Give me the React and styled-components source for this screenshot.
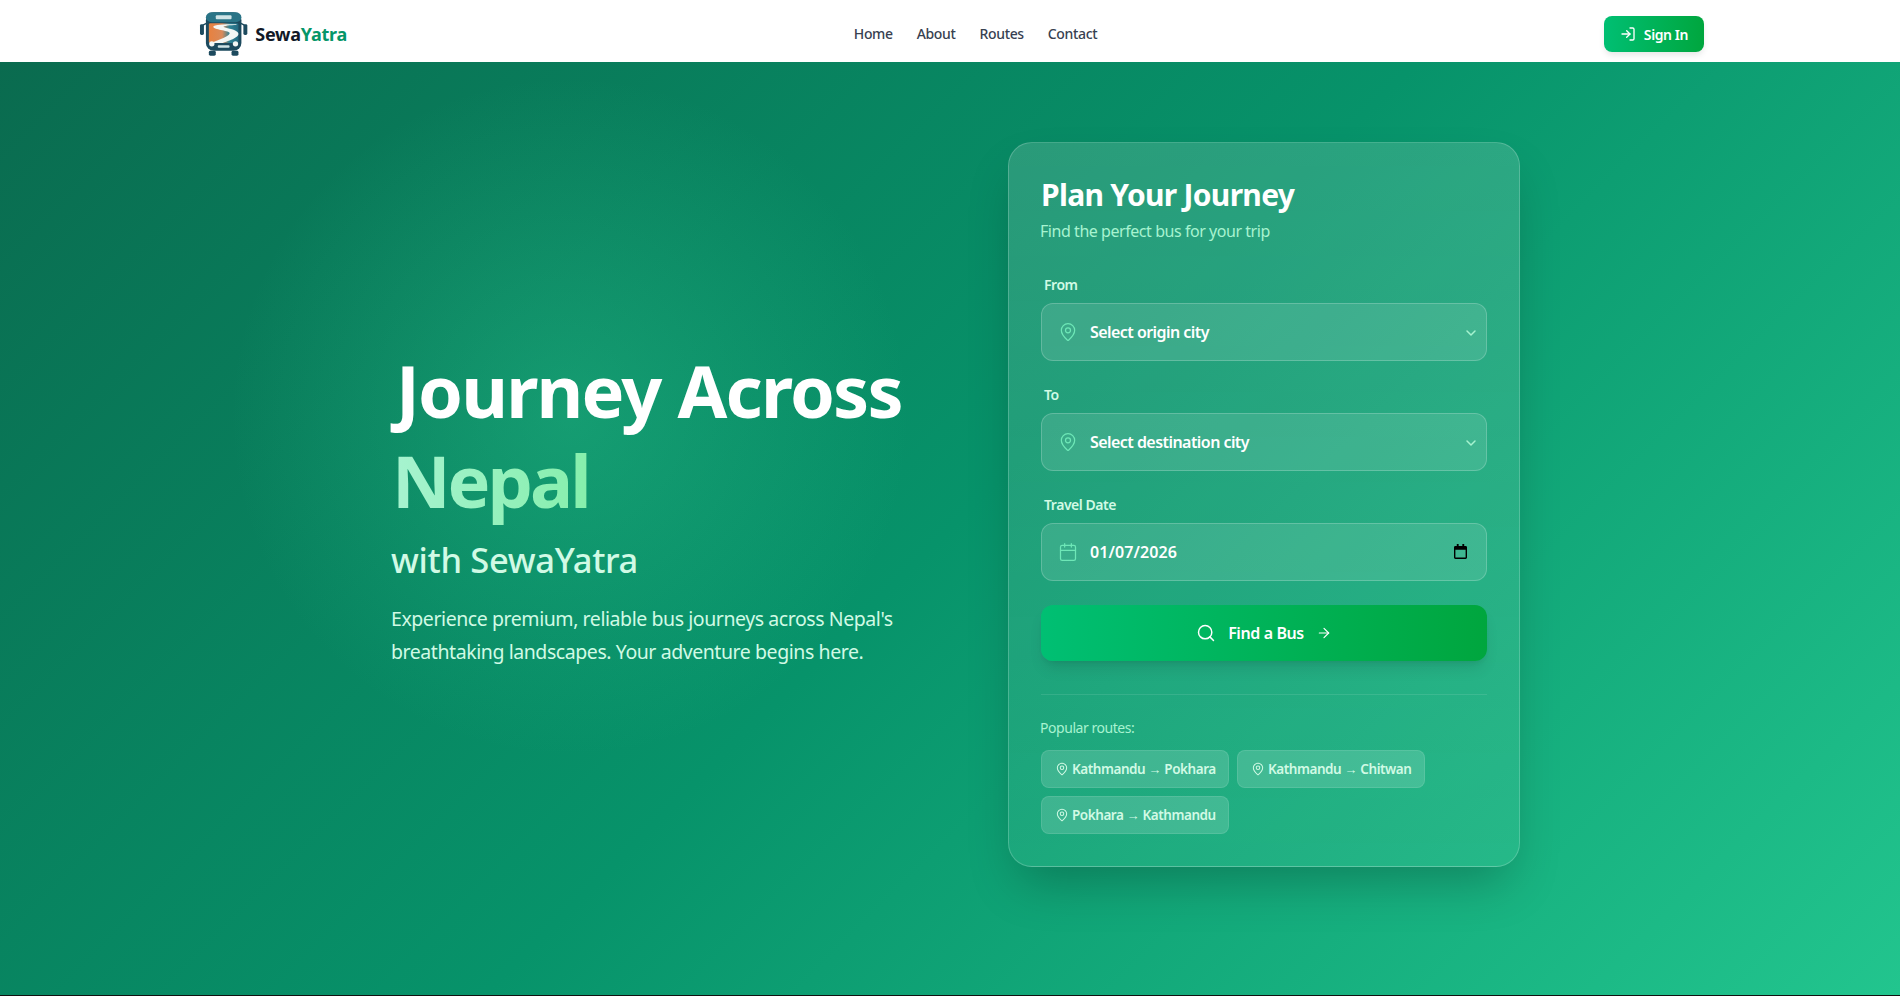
import React from 'react';
import styled, { createGlobalStyle } from 'styled-components';
import { LogIn, MapPin, ChevronDown, Calendar, Search, ArrowRight } from 'lucide-react';

const Global = createGlobalStyle`
  * { box-sizing: border-box; }
  html, body { margin: 0; padding: 0; }
  body { font-family: "Noto Sans", "Open Sans", sans-serif; background: #111; }
`;

const Page = styled.div`
  height: 996px;
  overflow: hidden;
  display: flex;
  flex-direction: column;
  padding-bottom: 1px;
`;

const Navbar = styled.header`
  height: 62px;
  flex: none;
  background: #fff;
  display: flex;
  align-items: center;
  justify-content: space-between;
  padding: 6px 196px 0 199px;
`;

const Brand = styled.div`
  width: 148px;
  display: flex;
  align-items: center;
  gap: 7px;
`;

const BrandName = styled.span`
  font-size: 18px;
  font-weight: 700;
  letter-spacing: -0.25px;
  color: #111827;
  span { color: #059669; }
`;

const NavLinks = styled.nav`
  display: flex;
  gap: 24px;
  margin-top: -1px;
`;

const NavLink = styled.a`
  font-size: 14px;
  font-weight: 500;
  letter-spacing: -0.35px;
  color: #374151;
`;

const SignIn = styled.button`
  width: 100px;
  height: 36px;
  border: none;
  border-radius: 8px;
  display: flex;
  align-items: center;
  justify-content: center;
  gap: 8px;
  font: 600 14px "Noto Sans", sans-serif;
  letter-spacing: -0.4px;
  color: #fff;
  background: linear-gradient(90deg, #00bf73, #00a63e);
  box-shadow: 0 4px 6px -1px rgba(0, 0, 0, 0.1);
`;

const Hero = styled.main`
  flex: 1;
  display: grid;
  grid-template-columns: 1fr 512px;
  align-items: center;
  align-content: start;
  padding: 80px 380px 0 391px;
  background:
    radial-gradient(circle 340px at 30% 38%, rgba(52, 211, 153, 0.3), transparent),
    linear-gradient(135deg, #0a6b4f 0%, #07936a 50%, #22c58e 100%);
`;

const Intro = styled.section`
  display: flex;
  flex-direction: column;
  padding-top: 4px;
`;

const Heading = styled.h1`
  margin: 0 0 0 5px;
  font-size: 72px;
  line-height: 90px;
  font-weight: 700;
  letter-spacing: -1.8px;
  color: #fff;
`;

const Accent = styled.span`
  display: block;
  margin-left: -4px;
  width: max-content;
  letter-spacing: -3px;
  background: linear-gradient(90deg, #a7f3d0, #86efac);
  -webkit-background-clip: text;
  background-clip: text;
  color: transparent;
`;

const Tagline = styled.div`
  margin-top: 12px;
  font-size: 34.5px;
  line-height: 46px;
  font-weight: 500;
  letter-spacing: -0.33px;
  color: #d1fae5;
`;

const Lead = styled.p`
  margin: 19px 0 0;
  font-size: 19.5px;
  line-height: 33px;
  letter-spacing: -0.43px;
  color: #d1fae5;
`;

const Card = styled.form`
  height: 725px;
  padding: 32px;
  border: 1px solid rgba(255, 255, 255, 0.2);
  border-radius: 24px;
  background: linear-gradient(180deg, rgba(255, 255, 255, 0.14), rgba(190, 255, 225, 0.08));
  box-shadow: 0 25px 50px -12px rgba(0, 0, 0, 0.25);
  display: flex;
  flex-direction: column;
`;

const CardTitle = styled.h2`
  margin: 0;
  font-size: 30px;
  line-height: 40px;
  font-weight: 700;
  letter-spacing: -0.7px;
  color: #fff;
`;

const CardSub = styled.p`
  margin: 4px 0 0 -1px;
  font-size: 16px;
  line-height: 24px;
  letter-spacing: -0.45px;
  color: #a7f3d0;
`;

const Field = styled.div`
  margin-top: ${({ $first }) => ($first ? '32px' : '24px')};
`;

const Label = styled.label`
  display: block;
  margin: 0 0 8px 3px;
  font-size: 14px;
  line-height: 20px;
  font-weight: 600;
  letter-spacing: -0.45px;
  color: #d1fae5;
`;

const Control = styled.div`
  position: relative;
  height: 58px;
  display: flex;
  align-items: center;
  padding: 0 16px;
  gap: 12px;
  border: 1px solid rgba(255, 255, 255, 0.2);
  border-radius: 12px;
  background: rgba(255, 255, 255, 0.11);
  color: #6ee7b7;
`;

const ControlText = styled.span`
  flex: 1;
  font-size: 16px;
  font-weight: 600;
  letter-spacing: ${({ $spacing }) => $spacing || '-0.55px'};
  color: #fff;
`;

const Chevron = styled.span`
  display: flex;
  margin-right: -9px;
  margin-top: 1px;
  color: #a7f3d0;
`;

const DateGlyph = styled.svg`
  margin-right: 3px;
  margin-top: -1px;
`;

const FindButton = styled.button`
  margin-top: 24px;
  height: 56px;
  flex: none;
  border: none;
  border-radius: 12px;
  display: flex;
  align-items: center;
  justify-content: center;
  gap: 12px;
  font: 600 16px "Noto Sans", sans-serif;
  letter-spacing: -0.4px;
  color: #fff;
  background: linear-gradient(90deg, #00bf73, #00a63e);
  box-shadow: 0 10px 15px -3px rgba(0, 0, 0, 0.1), 0 4px 6px -4px rgba(0, 0, 0, 0.1);
`;

const Divider = styled.hr`
  margin: 33px 0 0;
  border: none;
  border-top: 1px solid rgba(255, 255, 255, 0.1);
`;

const PopularLabel = styled.div`
  margin: 23px 0 0 -1px;
  font-size: 14px;
  line-height: 20px;
  letter-spacing: -0.45px;
  color: #a7f3d0;
`;

const Chips = styled.div`
  margin-top: 12px;
  display: flex;
  flex-wrap: wrap;
  gap: 8px;
`;

const Chip = styled.span`
  height: 38px;
  width: 188px;
  padding: 0 0 0 13px;
  display: inline-flex;
  align-items: center;
  gap: 3px;
  border: 1px solid rgba(255, 255, 255, 0.1);
  border-radius: 8px;
  background: rgba(255, 255, 255, 0.15);
  font-size: 13.5px;
  font-weight: 600;
  letter-spacing: -0.45px;
  color: #d1fae5;
  white-space: pre;
`;

const Arrow = styled.span`
  font-family: "Liberation Sans", sans-serif;
  font-size: 13px;
  letter-spacing: 0;
`;

const Logo = () => (
  <svg width="50" height="46" viewBox="0 0 50 46" aria-hidden="true">
    <defs>
      <linearGradient id="glass" x1="0" x2="1" y1="0" y2="0">
        <stop offset="0" stopColor="#e8813f" />
        <stop offset="0.45" stopColor="#d98a5a" />
        <stop offset="0.7" stopColor="#2f8396" />
        <stop offset="1" stopColor="#256a80" />
      </linearGradient>
    </defs>
    <rect x="1" y="13" width="4" height="11" rx="1.5" fill="#1d4a5e" />
    <rect x="45" y="13" width="4" height="11" rx="1.5" fill="#1d4a5e" />
    <path d="M4 14l4-2M46 14l-4-2" stroke="#1d4a5e" strokeWidth="1.5" />
    <rect x="7" y="1" width="36" height="39" rx="8" fill="#1d4a5e" />
    <rect x="7" y="1" width="36" height="10" rx="6" fill="#2a7487" />
    <rect x="17" y="4" width="16" height="4" rx="1" fill="#cfe3e6" />
    <rect x="10" y="12" width="30" height="20" rx="1.5" fill="url(#glass)" />
    <path d="M38 13c-8 0-20 0-23 2-3 3 10 4 15 6 4 2-3 6-18 11h12c10-3 19-7 15-11-3-3-13-4-14-5-1-1 7-2 13-2z" fill="#f3f6f4" />
    <circle cx="13" cy="33" r="2.7" fill="#f3f6f4" />
    <circle cx="37" cy="33" r="2.7" fill="#f3f6f4" />
    <rect x="19" y="34.5" width="12" height="2.5" rx="1" fill="#cfe3e6" />
    <rect x="10" y="40" width="7" height="5" rx="1.5" fill="#1d4a5e" />
    <rect x="33" y="40" width="7" height="5" rx="1.5" fill="#1d4a5e" />
  </svg>
);

const DateIcon = () => (
  <DateGlyph width="13" height="15" viewBox="0 0 14 16" aria-hidden="true">
    <path d="M3 0h2v2h4V0h2v2h1.5A1.5 1.5 0 0 1 14 3.5v11a1.5 1.5 0 0 1-1.5 1.5h-11A1.5 1.5 0 0 1 0 14.5v-11A1.5 1.5 0 0 1 1.5 2H3zM1.5 6v8.5h11V6z" fill="#000" />
  </DateGlyph>
);

const ROUTES = [
  ['Kathmandu', 'Pokhara'],
  ['Kathmandu', 'Chitwan'],
  ['Pokhara', 'Kathmandu'],
];

export default function App() {
  return (
    <Page>
      <Global />
      <Navbar>
        <Brand>
          <Logo />
          <BrandName>Sewa<span>Yatra</span></BrandName>
        </Brand>
        <NavLinks>
          <NavLink>Home</NavLink>
          <NavLink>About</NavLink>
          <NavLink>Routes</NavLink>
          <NavLink>Contact</NavLink>
        </NavLinks>
        <SignIn type="button"><LogIn size={16} strokeWidth={2} />Sign In</SignIn>
      </Navbar>
      <Hero>
        <Intro>
          <Heading>Journey Across<Accent>Nepal</Accent></Heading>
          <Tagline>with SewaYatra</Tagline>
          <Lead>Experience premium, reliable bus journeys across Nepal's<br />breathtaking landscapes. Your adventure begins here.</Lead>
        </Intro>
        <Card>
          <CardTitle>Plan Your Journey</CardTitle>
          <CardSub>Find the perfect bus for your trip</CardSub>
          <Field $first>
            <Label>From</Label>
            <Control>
              <MapPin size={20} strokeWidth={1.5} />
              <ControlText>Select origin city</ControlText>
              <Chevron><ChevronDown size={16} strokeWidth={2.25} /></Chevron>
            </Control>
          </Field>
          <Field>
            <Label>To</Label>
            <Control>
              <MapPin size={20} strokeWidth={1.5} />
              <ControlText>Select destination city</ControlText>
              <Chevron><ChevronDown size={16} strokeWidth={2.25} /></Chevron>
            </Control>
          </Field>
          <Field>
            <Label>Travel Date</Label>
            <Control>
              <Calendar size={20} strokeWidth={1.5} />
              <ControlText $spacing="0.1px">01/07/2026</ControlText>
              <DateIcon />
            </Control>
          </Field>
          <FindButton type="button">
            <Search size={20} strokeWidth={1.75} />Find a Bus<ArrowRight size={16} strokeWidth={1.75} />
          </FindButton>
          <Divider />
          <PopularLabel>Popular routes:</PopularLabel>
          <Chips>
            {ROUTES.map(([from, to]) => (
              <Chip key={from + to}>
                <MapPin size={14} strokeWidth={1.75} />
                <span>{from} <Arrow>→</Arrow> {to}</span>
              </Chip>
            ))}
          </Chips>
        </Card>
      </Hero>
    </Page>
  );
}
